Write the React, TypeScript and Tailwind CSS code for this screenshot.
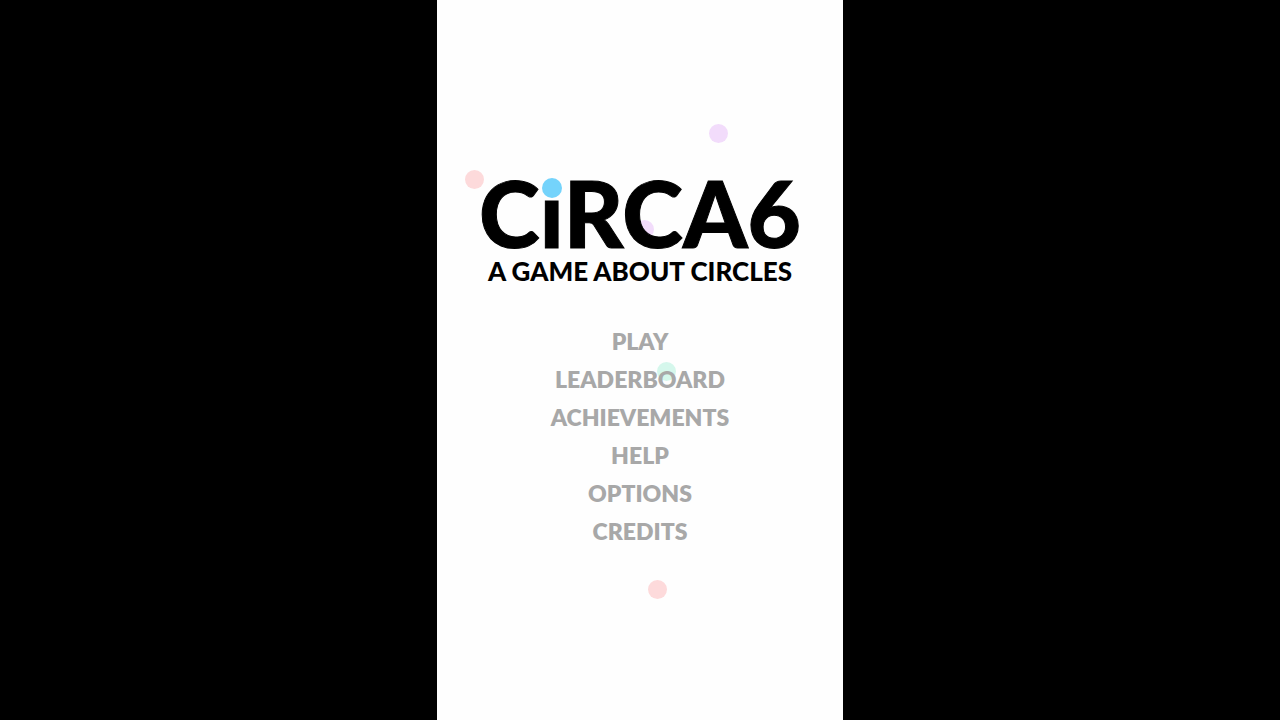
import React from 'react';
import clsx from 'clsx';

const menuItems = ['PLAY', 'LEADERBOARD', 'ACHIEVEMENTS', 'HELP', 'OPTIONS', 'CREDITS'];

const circles = [
  { id: 1, place: 'left-[272px] top-[124px]', color: 'bg-[#f2dcfb]' },
  { id: 2, place: 'left-[28px] top-[170px]', color: 'bg-[#fddadb]' },
  { id: 3, place: 'left-[198px] top-[220px]', color: 'bg-[#f2dcfb]' },
  { id: 4, place: 'left-[220px] top-[362px]', color: 'bg-[#d5f7ec]' },
  { id: 5, place: 'left-[211px] top-[580px]', color: 'bg-[#fddadb]' },
];

function Circles() {
  return (
    <div aria-hidden="true">
      {circles.map((circle) => (
        <span
          key={circle.id}
          className={clsx('absolute h-[19px] w-[19px] rounded-full', circle.place, circle.color)}
        />
      ))}
    </div>
  );
}

function Logo() {
  return (
    <header className="relative text-center text-black">
      <h1 className="text-[92px] leading-[90px] font-black [-webkit-text-stroke:1px_black]">
        C
        <span className="relative">
          i
          <span className="absolute top-[21px] left-1/2 h-5 w-5 -translate-x-1/2 rounded-full bg-[#74d3fb]" />
        </span>
        RCA6
      </h1>
      <p className="text-[26px] leading-[26px] font-black">A GAME ABOUT CIRCLES</p>
    </header>
  );
}

export default function App() {
  return (
    <div className="flex min-h-screen justify-center bg-black font-['Lato',sans-serif]">
      <main className="relative w-full max-w-[406px] overflow-hidden bg-[#fefefe] pt-42 pb-10">
        <Circles />
        <Logo />
        <nav className="relative mt-[38px] flex flex-col items-center">
          {menuItems.map((item) => (
            <button
              key={item}
              type="button"
              className="cursor-pointer px-4 text-[23px] leading-[38px] font-extrabold text-[#a8a8a8] hover:text-[#808080]"
            >
              {item}
            </button>
          ))}
        </nav>
      </main>
    </div>
  );
}
